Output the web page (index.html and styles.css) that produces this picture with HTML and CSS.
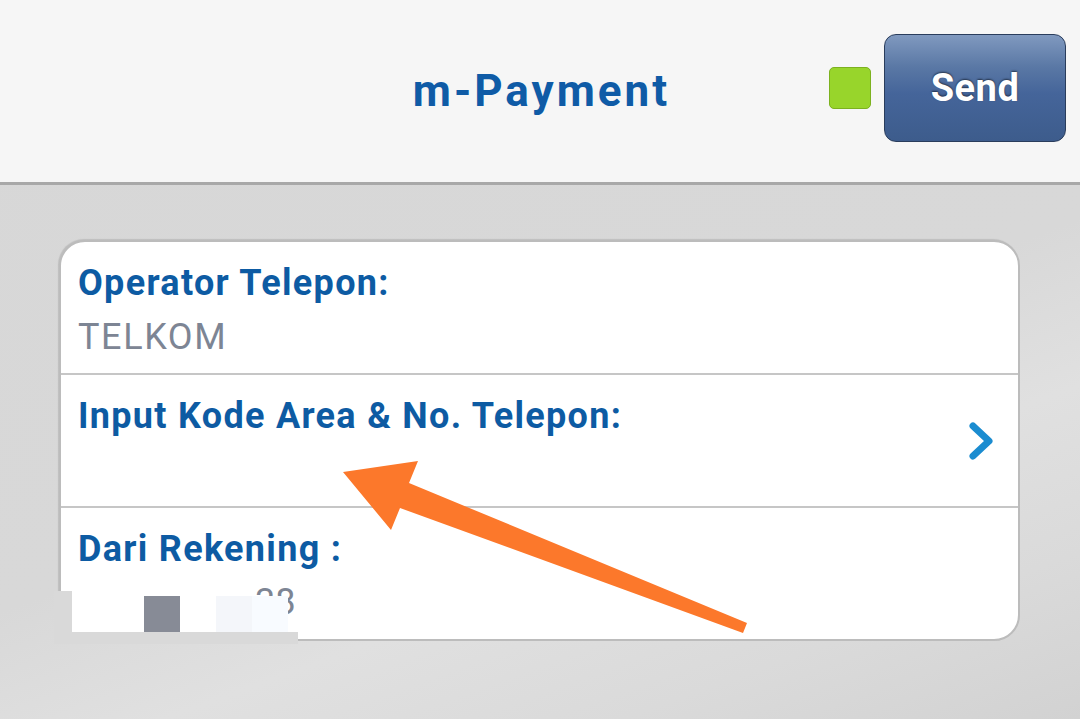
FILE: index.html
```html
<!DOCTYPE html>
<html lang="id">
<head>
<meta charset="utf-8">
<title>m-Payment</title>
<link rel="stylesheet" href="styles.css">
</head>
<body>
<div class="screen">
  <header class="topbar">
    <div class="side"></div>
    <h1 class="title">m-Payment</h1>
    <div class="side actions">
      <span class="status"></span>
      <button class="send">Send</button>
    </div>
  </header>
  <main class="content">
    <section class="card">
      <div class="row">
        <div class="label">Operator Telepon:</div>
        <div class="value">TELKOM</div>
      </div>
      <div class="row row-link">
        <div class="label">Input Kode Area &amp; No. Telepon:</div>
        <svg class="chevron" width="28" height="40" viewBox="0 0 28 40"><path d="M6 5 L22 20 L6 35" fill="none" stroke="#1b8cd0" stroke-width="7" stroke-linecap="round" stroke-linejoin="round"/></svg>
      </div>
      <div class="row">
        <div class="label">Dari Rekening :</div>
        <div class="value account">38</div>
      </div>
    </section>
  </main>
  <div class="redact">
    <div class="redact-left"></div>
    <div class="redact-bottom"></div>
    <div class="redact-white"></div>
    <div class="redact-gray"></div>
    <div class="redact-light1"></div>
    <div class="redact-light2"></div>
  </div>
  <svg class="arrow" width="1080" height="719" viewBox="0 0 1080 719">
    <polygon points="343,472 418,461 409,483 747,623 743,633 400,508 391,530" fill="#fc782b"/>
  </svg>
</div>
</body>
</html>
```
FILE: styles.css
```css
* { box-sizing: border-box; }
html, body { margin: 0; padding: 0; }
body {
  width: 1080px;
  height: 719px;
  overflow: hidden;
  font-family: Roboto, "Noto Sans", Arial, sans-serif;
}
.screen {
  position: relative;
  width: 1080px;
  height: 719px;
  background: linear-gradient(160deg, #d7d7d7 0%, #d8d8d8 55%, #e0e0e0 70%, #dadada 85%, #d2d2d2 100%);
}
.topbar {
  height: 185px;
  background: #f6f6f6;
  border-bottom: 3px solid #a8a8a8;
  display: grid;
  grid-template-columns: 1fr auto 1fr;
  align-items: center;
}
.title {
  margin: 0;
  padding-left: 3px;
  font-size: 44px;
  font-weight: 700;
  color: #0f5ba6;
  letter-spacing: 3px;
}
.actions {
  display: flex;
  justify-content: flex-end;
  align-items: center;
  gap: 13px;
  padding-right: 14px;
  padding-bottom: 7px;
}
.status {
  width: 42px;
  height: 42px;
  background: #98d52b;
  border: 1px solid #7cb11f;
  border-radius: 5px;
}
.send {
  width: 182px;
  height: 108px;
  border: 1px solid #2a3d5c;
  border-radius: 12px;
  background: linear-gradient(180deg, #8099bf 0%, #5a78a5 30%, #45659a 55%, #3d5c8c 100%);
  color: #fff;
  font-family: Roboto, Arial, sans-serif;
  font-weight: 700;
  font-size: 38px;
  letter-spacing: 0.5px;
  text-shadow: 0 -1px 2px rgba(0,0,0,0.55);
  padding: 0;
}
.content {
  padding: 55px 60px 0 59px;
}
.card {
  background: #fff;
  border: 2px solid #bcbcbc;
  border-radius: 26px;
  box-shadow: -1px -1px 1px rgba(0,0,0,0.12);
  overflow: hidden;
}
.row {
  height: 133px;
  padding: 20px 18px 0 17px;
  border-bottom: 2px solid #c6c6c6;
  position: relative;
}
.row:last-child { border-bottom: none; height: 131px; }
.label {
  font-size: 36px;
  line-height: 42px;
  font-weight: 700;
  color: #0d5ba3;
  letter-spacing: 1.3px;
}
.value {
  margin-top: 12px;
  font-size: 36px;
  line-height: 42px;
  color: #7d8594;
  letter-spacing: 1.6px;
}
.account {
  padding-left: 177px;
  margin-top: 11px;
  letter-spacing: 0;
}
.row-link .chevron {
  position: absolute;
  right: 23px;
  top: 46px;
}
.redact { position: absolute; left: 0; top: 0; }
.redact > div { position: absolute; }
.redact-left { left: 54px; top: 591px; width: 18px; height: 53px; background: #d9d9d9; }
.redact-bottom { left: 54px; top: 632px; width: 244px; height: 12px; background: #d9d9d9; }
.redact-white { left: 72px; top: 596px; width: 216px; height: 36px; background: #fff; }
.redact-gray { left: 144px; top: 596px; width: 36px; height: 36px; background: #878b96; }
.redact-light1 { left: 216px; top: 596px; width: 36px; height: 36px; background: #f4f6fa; }
.redact-light2 { left: 252px; top: 596px; width: 36px; height: 36px; background: #f8fbff; }
.arrow { position: absolute; left: 0; top: 0; pointer-events: none; }
```
